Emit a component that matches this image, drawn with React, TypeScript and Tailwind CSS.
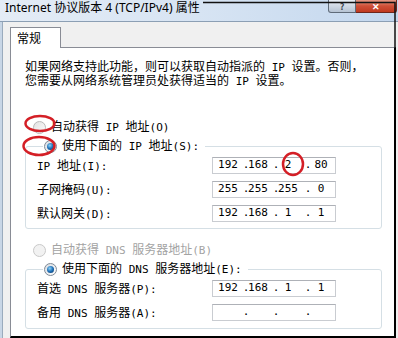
import type { ReactNode } from 'react';

const ASCII = /^[\x20-\x7e]+$/;

// SimSun-style half-width latin: mono at 11px gives ~6.6px advance
function Mix({ text }: { text: string }) {
  const parts = text.split(/([\x20-\x7e]+)/).filter(Boolean);
  return (
    <>
      {parts.map((p, i) =>
        ASCII.test(p) ? (
          <span key={i} className="whitespace-pre font-['DejaVu_Sans_Mono',monospace] text-[11px]">
            {p}
          </span>
        ) : (
          <span key={i}>{p}</span>
        ),
      )}
    </>
  );
}

function Radio({ checked, disabled }: { checked?: boolean; disabled?: boolean }) {
  return (
    <span
      className={
        'flex h-[13px] w-[13px] shrink-0 items-center justify-center rounded-full border ' +
        (disabled
          ? 'border-[#c9c9c9] bg-[#f2f2f2]'
          : checked
            ? 'border-[#7f8a96] bg-gradient-to-br from-[#d9dde2] to-[#ffffff]'
            : 'border-[#b9b9b9] bg-gradient-to-br from-[#e2e2e2] to-[#fbfbfb]')
      }
    >
      {checked && (
        <span className="h-[7px] w-[7px] rounded-full bg-[radial-gradient(circle_at_40%_35%,#8fd3f7,#1d6fb7_50%,#0b2f5c)]" />
      )}
    </span>
  );
}

function RadioRow({ label, checked, disabled }: { label: string; checked?: boolean; disabled?: boolean }) {
  return (
    <div className={'flex h-[16px] items-center gap-[5px] ' + (disabled ? 'text-[#a3a3a3]' : 'text-black')}>
      <Radio checked={checked} disabled={disabled} />
      <span className="whitespace-nowrap leading-[12px]">
        <Mix text={label} />
      </span>
    </div>
  );
}

const SEG_GAPS = ['ml-[15px]', 'ml-[18px]', 'ml-[12px]', 'ml-[18px]', 'ml-[12px]', 'ml-[20px]', 'ml-[13px]'];

function IpBox({ parts }: { parts: string[] }) {
  const items = [parts[0], '.', parts[1], '.', parts[2], '.', parts[3]];
  return (
    <div className="flex h-[17px] w-[124px] items-center border border-[#c9ccd1] border-t-[#aeb1b7] bg-white font-['DejaVu_Sans_Mono',monospace] text-[11px] text-black">
      {items.map((t, i) => (
        <span key={i} className={'flex w-0 justify-center whitespace-pre ' + SEG_GAPS[i]}>
          {t}
        </span>
      ))}
    </div>
  );
}

function FieldRow({ label, parts }: { label: string; parts: string[] }) {
  return (
    <div className="flex h-[17px] items-center">
      <span className="w-[175px] whitespace-nowrap leading-[12px]">
        <Mix text={label} />
      </span>
      <IpBox parts={parts} />
    </div>
  );
}

function Group({ legend, children, className }: { legend: ReactNode; children: ReactNode; className?: string }) {
  return (
    <fieldset className={'ml-[14px] w-[357px] rounded-[3px] border border-[#d5dfe5] pl-[11px] ' + (className ?? '')}>
      <legend className="ml-[6px] px-[1px] pr-[6px]">{legend}</legend>
      {children}
    </fieldset>
  );
}

export default function App() {
  return (
    <div className="relative flex h-[338px] w-[398px] flex-col overflow-hidden bg-[#f0f0f0] font-['Noto_Sans_CJK_SC','Noto_Sans',sans-serif] text-[12px] text-black">
      {/* title bar (top cut off in the shot) */}
      <div className="flex h-[22px] shrink-0 items-start justify-between border-b border-[#8c9fb4] bg-gradient-to-r from-[#e4ecf6] via-[#d7e4f3] to-[#c3d7ee]">
        <span className="whitespace-nowrap pl-[5px] pt-[1px] font-['Noto_Sans','Noto_Sans_CJK_SC',sans-serif] text-[12px] leading-[14px]">
          Internet 协议版本 4 (TCP/IPv4) 属性
        </span>
        <div className="flex items-start pr-[1px]">
          <div className="flex h-[13px] w-[28px] items-center justify-center rounded-bl-[3px] border border-t-0 border-[#5f6b79] bg-gradient-to-b from-[#e9eef5] to-[#b6c3d3] text-[9px] font-bold leading-none text-[#3c4651]">
            ?
          </div>
          <div className="flex h-[13px] w-[41px] items-center justify-center rounded-br-[3px] border border-l-0 border-t-0 border-[#6e261c] bg-gradient-to-b from-[#e49a87] via-[#cf4f37] to-[#c0391f] text-[9px] font-bold leading-none text-white">
            ✕
          </div>
        </div>
      </div>

      <div className="flex min-h-0 flex-1">
        <div className="w-[3px] shrink-0 border-r border-[#9aabbd] bg-[#c8d6e6]" />
        <div className="flex min-w-0 flex-1 flex-col pl-[7px] pr-[2px] pt-[5px]">
          {/* tab */}
          <div className="relative z-10 -mb-px flex h-[21px] w-[51px] items-start border border-b-0 border-[#898c95] bg-white pl-[6px] pt-[3px] leading-[14px]">
            常规
          </div>

          {/* tab panel */}
          <div className="flex min-h-0 flex-1 flex-col border-l border-t border-[#898c95] border-b-2 border-r-2 border-b-black border-r-black bg-white">
            <p className="pl-[14px] pt-[12px] leading-[12px]">
              <Mix text="如果网络支持此功能，则可以获取自动指派的 IP 设置。否则，" />
              <br />
              <Mix text="您需要从网络系统管理员处获得适当的 IP 设置。" />
            </p>

            <div className="mt-[31px] pl-[22px]">
              <RadioRow label="自动获得 IP 地址(O)" />
            </div>

            <Group legend={<RadioRow label="使用下面的 IP 地址(S):" checked />} className="mt-[3px] pb-[6px]">
              <div className="mt-[3px] flex flex-col gap-[7px]">
                <FieldRow label="IP 地址(I):" parts={['192', '168', '2', '80']} />
                <FieldRow label="子网掩码(U):" parts={['255', '255', '255', '0']} />
                <FieldRow label="默认网关(D):" parts={['192', '168', '1', '1']} />
              </div>
            </Group>

            <div className="mt-[13px] pl-[22px]">
              <RadioRow label="自动获得 DNS 服务器地址(B)" disabled />
            </div>

            <Group legend={<RadioRow label="使用下面的 DNS 服务器地址(E):" checked />} className="mt-[3px] pb-[7px]">
              <div className="mt-[3px] flex flex-col gap-[7px]">
                <FieldRow label="首选 DNS 服务器(P):" parts={['192', '168', '1', '1']} />
                <FieldRow label="备用 DNS 服务器(A):" parts={['', '', '', '']} />
              </div>
            </Group>
          </div>
        </div>
      </div>

      {/* annotations drawn over the shot: black frame edge and red marks */}
      <svg className="pointer-events-none absolute inset-0" width="398" height="338" viewBox="0 0 398 338" fill="none">
        <path d="M203 2.5H395V48" stroke="#111" strokeWidth="1.5" />
        <ellipse cx="40" cy="123.5" rx="14.5" ry="7.5" stroke="#d41f26" strokeWidth="2.5" />
        <ellipse cx="39" cy="146" rx="15.5" ry="9" stroke="#d41f26" strokeWidth="2.5" />
        <ellipse cx="293" cy="164" rx="10" ry="11" stroke="#d41f26" strokeWidth="2.5" />
      </svg>
    </div>
  );
}
